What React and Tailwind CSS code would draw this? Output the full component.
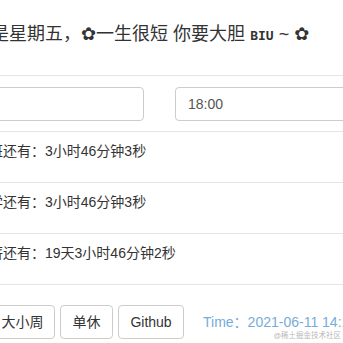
import React from "react";

// 倒计时小面板（截图局部）
const rows = [
  { label: "距离下班还有：", value: "3小时46分钟3秒" },
  { label: "距离放学还有：", value: "3小时46分钟3秒" },
  { label: "距离发薪还有：", value: "19天3小时46分钟2秒" },
];

export default function App() {
  return (
    <div
      className="relative w-[343px] h-[343px] overflow-hidden bg-white text-[#333] text-[14px]"
      style={{ fontFamily: '"Liberation Sans", "Noto Sans CJK SC", sans-serif' }}
    >
      {/* 标题 */}
      <div className="h-[76px] border-b border-[#e5e5e5] pt-[24px]">
        <h4 className="-ml-[45px] whitespace-nowrap text-[18px] leading-[20px] font-normal">
          今天是星期五，<span style={{ fontFamily: '"DejaVu Sans", sans-serif' }}>✿</span>一生很短 你要大胆{" "}
          <span className="text-[13px] font-semibold" style={{ fontFamily: '"DejaVu Sans Mono", monospace' }}>
            BIU
          </span>{" "}
          ~ <span style={{ fontFamily: '"DejaVu Sans", sans-serif' }}>✿</span>
        </h4>
      </div>

      {/* 时间输入 */}
      <div className="h-[56px] border-b border-[#e5e5e5] pt-[11px]">
        <div className="-ml-[30px] flex gap-[31px]">
          <input
            className="w-[174px] h-[34px] shrink-0 rounded-[4px] border border-[#ccc] px-3 text-[#555] outline-none"
            defaultValue=""
          />
          <input
            className="w-[174px] h-[34px] shrink-0 rounded-[4px] border border-[#ccc] px-3 text-[#555] outline-none"
            defaultValue="18:00"
          />
        </div>
      </div>

      {/* 倒计时 */}
      {rows.map((r, i) => (
        <div key={i} className="h-[51px] border-b border-[#e5e5e5] pt-[9px]">
          <p className="-ml-[53px] whitespace-nowrap leading-[20px]">
            {r.label}
            {r.value}
          </p>
        </div>
      ))}

      {/* 按钮 */}
      <div className="mt-[20px] -ml-[10px] flex items-center gap-[5px]">
        <button className="w-[65px] h-[34px] shrink-0 rounded-[4px] border border-[#ccc] bg-white text-[#333]">大小周</button>
        <button className="w-[53px] h-[34px] shrink-0 rounded-[4px] border border-[#ccc] bg-white text-[#333]">单休</button>
        <button className="w-[66px] h-[34px] shrink-0 rounded-[4px] border border-[#ccc] bg-white text-[#333]">Github</button>
        <span className="ml-[14px] shrink-0 whitespace-nowrap text-[#76acd9]">Time：2021-06-11 14:14:00</span>
      </div>

      <span className="absolute right-[2px] bottom-[3px] text-[7.5px] leading-[9px] text-[#b8b8b8]">@稀土掘金技术社区</span>
    </div>
  );
}
